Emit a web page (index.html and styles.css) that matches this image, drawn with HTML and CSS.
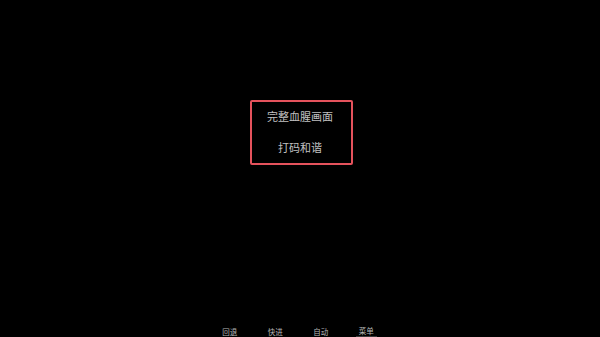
FILE: index.html
```html
<!DOCTYPE html>
<html lang="zh">
<head>
  <meta charset="UTF-8" />
  <meta name="viewport" content="width=device-width, initial-scale=1.0"/>
  <title>选项</title>
  <link rel="stylesheet" href="styles.css">
</head>
<body>
  <main class="screen">
    <div class="stage">
      <div class="choices">
        <button class="choice">完整血腥画面</button>
        <button class="choice">打码和谐</button>
      </div>
    </div>
    <nav class="menu">
      <button class="menu-btn">回退</button>
      <button class="menu-btn">快进</button>
      <button class="menu-btn">自动</button>
      <button class="menu-btn active">菜单</button>
    </nav>
  </main>
</body>
</html>
```

FILE: styles.css
```css
* {
  margin: 0;
  padding: 0;
  box-sizing: border-box;
}
html, body {
  background-color: black;
  height: 100%;
}
body {
  font-family: "Noto Sans CJK SC", "Noto Sans", sans-serif;
  color: #c0c0c0;
}
.screen {
  display: flex;
  flex-direction: column;
  height: 337px;
}
.stage {
  flex: 1;
  display: flex;
  justify-content: center;
  padding-top: 100px;
  padding-left: 3px;
}
.choices {
  width: 103px;
  height: 65px;
  border: 2px solid #e5525c;
  border-radius: 2px;
  display: flex;
  flex-direction: column;
  align-items: center;
  padding-top: 5px;
  padding-right: 3px;
  gap: 13px;
}
.choice {
  background: none;
  border: none;
  color: #c0c0c0;
  font-family: inherit;
  font-size: 11px;
  line-height: 18px;
  cursor: pointer;
}
.menu {
  display: flex;
  justify-content: center;
  gap: 30.5px;
  height: 14px;
  padding-top: 3px;
  padding-right: 4px;
}
.menu-btn {
  background: none;
  border: none;
  color: #b5b5b5;
  font-family: inherit;
  font-size: 7.5px;
  line-height: 10px;
  height: 11px;
  cursor: pointer;
}
.menu-btn.active {
  border-bottom: 1px solid #3a3a3a;
  padding: 0 3px;
  margin: 0 -3px;
}
```
